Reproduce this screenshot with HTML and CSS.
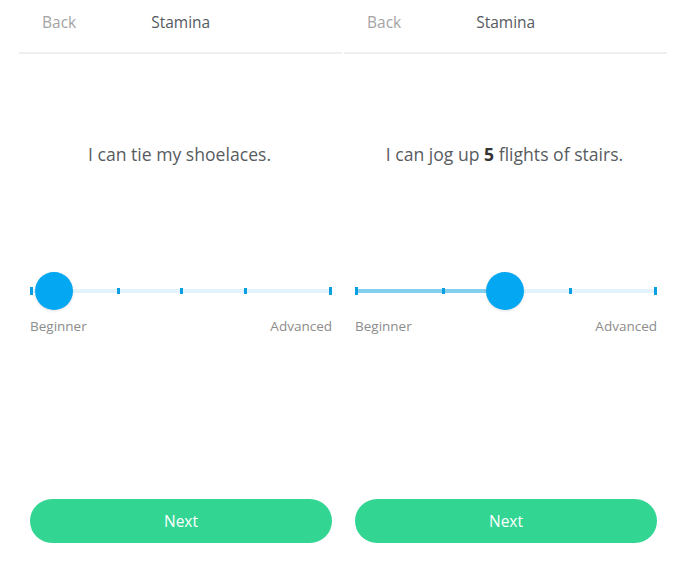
FILE: index.html
```html
<!DOCTYPE html>
<html>
<head>
<meta charset="utf-8">
<link rel="stylesheet" href="styles.css">
</head>
<body>
<div class="screens">
  <section class="panel">
    <header class="topbar">
      <span class="back">Back</span>
      <span class="title">Stamina</span>
    </header>
    <p class="question">I can tie my shoelaces.</p>
    <div class="slider">
      <div class="track"></div>
      <span class="tick end" style="left:0px"></span>
      <span class="tick" style="left:87px"></span>
      <span class="tick" style="left:150px"></span>
      <span class="tick" style="left:214px"></span>
      <span class="tick end" style="left:299px"></span>
      <span class="thumb" style="left:5px"></span>
    </div>
    <div class="labels"><span>Beginner</span><span>Advanced</span></div>
    <button class="next">Next</button>
  </section>
  <section class="panel">
    <header class="topbar">
      <span class="back">Back</span>
      <span class="title">Stamina</span>
    </header>
    <p class="question">I can jog up <b>5</b> flights of stairs.</p>
    <div class="slider">
      <div class="track"></div>
      <div class="fill" style="width:150px"></div>
      <span class="tick end" style="left:0px"></span>
      <span class="tick" style="left:87px"></span>
      <span class="tick" style="left:150px"></span>
      <span class="tick" style="left:214px"></span>
      <span class="tick end" style="left:299px"></span>
      <span class="thumb" style="left:131px"></span>
    </div>
    <div class="labels"><span>Beginner</span><span>Advanced</span></div>
    <button class="next">Next</button>
  </section>
</div>
</body>
</html>
```
FILE: styles.css
```css
html, body {
  margin: 0;
  padding: 0;
  background: #ffffff;
  font-family: "Open Sans", "Noto Sans", sans-serif;
}
.screens {
  display: flex;
  padding-left: 17px;
}
.panel {
  width: 325px;
  display: flex;
  flex-direction: column;
}
.topbar {
  margin-left: 2px;
  border-bottom: 2px solid #efefef;
  display: flex;
  align-items: flex-start;
  padding-top: 12px;
  box-sizing: border-box;
  height: 54px;
  font-size: 15.5px;
  line-height: 20px;
}
.back {
  color: #a4a4a4;
  margin-left: 23px;
}
.title {
  color: #555a5e;
  margin-left: 75px;
}
.question {
  margin: 88px 0 0;
  text-align: center;
  font-size: 17.6px;
  line-height: 24px;
  color: #585c5f;
}
.question b {
  font-weight: 700;
  color: #333;
}
.slider {
  position: relative;
  margin: 106px 0 0 13px;
  width: 302px;
  height: 38px;
}
.track {
  position: absolute;
  left: 0;
  right: 0;
  top: 17px;
  height: 4px;
  background: #e2f3fb;
}
.fill {
  position: absolute;
  left: 0;
  top: 17px;
  height: 4px;
  background: #84cfee;
}
.tick {
  position: absolute;
  top: 16px;
  width: 3px;
  height: 6px;
  background: #0a9fe0;
}
.tick.end {
  top: 15px;
  height: 8px;
}
.thumb {
  position: absolute;
  top: 0;
  width: 38px;
  height: 38px;
  border-radius: 50%;
  background: #04a7f1;
  box-shadow: 0 1px 3px rgba(0, 0, 0, 0.12);
}
.labels {
  margin: 8px 0 0 13px;
  width: 302px;
  display: flex;
  justify-content: space-between;
  font-size: 13.5px;
  line-height: 16px;
  color: #8c8c8c;
}
.next {
  margin: 165px 0 0 13px;
  width: 302px;
  height: 44px;
  border: none;
  border-radius: 22px;
  background: #33d593;
  color: #ffffff;
  font-family: "Open Sans", "Noto Sans", sans-serif;
  font-size: 15.5px;
  font-weight: 500;
  padding: 0;
}
```
